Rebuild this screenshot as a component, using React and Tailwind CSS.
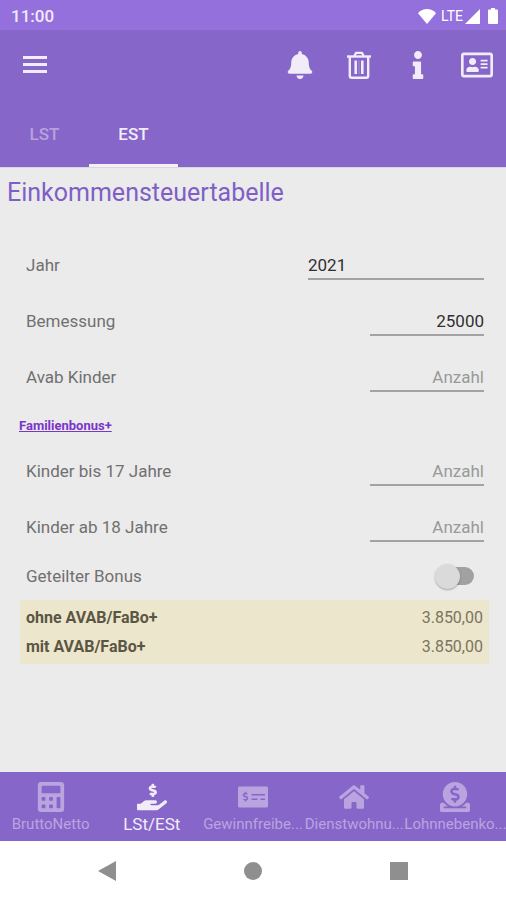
import { useState } from "react";
import {
  FaBell,
  FaInfo,
  FaRegAddressCard,
  FaCalculator,
  FaHandHoldingUsd,
  FaMoneyCheckAlt,
  FaHome,
  FaDonate,
} from "react-icons/fa";

function MenuIcon() {
  return (
    <svg viewBox="0 0 24 18" className="h-[18px] w-6" fill="currentColor" aria-hidden="true">
      <rect y="0" width="24" height="3" />
      <rect y="7" width="24" height="3" />
      <rect y="14" width="24" height="3" />
    </svg>
  );
}

function TrashIcon() {
  return (
    <svg viewBox="0 0 24 28" className="h-7 w-6" fill="none" stroke="currentColor" aria-hidden="true">
      <path d="M0 5.5h24" strokeWidth="2.4" />
      <path d="M7.4 5 9 1.8h6L16.6 5" strokeWidth="2.2" strokeLinejoin="round" />
      <path d="M2.8 5.5v19.200a2 2 0 0 0 2 2h14.400a2 2 0 0 0 2-2V5.500" strokeWidth="2.400" />
      <path d="M8.700 9.500v13.500M15.300 9.500v13.500" strokeWidth="2.600" />
      <path d="M12 9.500v13.500" strokeWidth="1" opacity="0.35" />
    </svg>
  );
}

function StatusBar() {
  return (
    <div className="flex h-[30px] items-center justify-between bg-[#9370db] pt-0.5 pl-[11px] pr-2 text-white">
      <span className="text-[17px] leading-5 font-medium text-[#f0eafb]">11:00</span>
      <div className="flex items-center">
        <svg viewBox="0 0 18 15" className="h-[15px] w-[18px]" fill="currentColor" aria-hidden="true">
          <path d="M0 4.200C5-1.400 13-1.400 18 4.200L9 15z" />
        </svg>
        <span className="ml-[5px] text-[14px] leading-5">LTE</span>
        <svg viewBox="0 0 15 15" className="ml-[2px] h-[15px] w-[15px]" fill="currentColor" aria-hidden="true">
          <path d="M15 0v15H0z" />
        </svg>
        <svg viewBox="0 0 10 16" className="ml-2 h-4 w-[10px]" fill="currentColor" aria-hidden="true">
          <path d="M3 0h4v1.600h2a1 1 0 0 1 1 1V15a1 1 0 0 1-1 1H1a1 1 0 0 1-1-1V2.600a1 1 0 0 1 1-1h2z" />
        </svg>
      </div>
    </div>
  );
}

function Toolbar() {
  return (
    <div className="flex h-[70px] items-center justify-between text-[#f1ecf8]">
      <button type="button" aria-label="Menü" className="flex h-12 w-[70px] items-center justify-center">
        <MenuIcon />
      </button>
      <div className="flex">
        <button type="button" aria-label="Benachrichtigungen" className="flex h-12 w-[59px] items-center justify-center">
          <FaBell className="h-7 w-7" />
        </button>
        <button type="button" aria-label="Löschen" className="flex h-12 w-[59px] items-center justify-center">
          <TrashIcon />
        </button>
        <button type="button" aria-label="Info" className="flex h-12 w-[59px] items-center justify-center">
          <FaInfo className="h-7 w-7" />
        </button>
        <button type="button" aria-label="Kontakt" className="flex h-12 w-[59px] items-center justify-center">
          <FaRegAddressCard className="h-8 w-8" />
        </button>
      </div>
    </div>
  );
}

function Tabs() {
  const base = "flex h-[67px] w-[89px] items-center justify-center border-b-[3px] pt-1 text-[17px] leading-5 font-medium";
  return (
    <div role="tablist" className="flex">
      <button type="button" role="tab" aria-selected="false" className={`${base} border-transparent text-[#b7a2dd]`}>
        LST
      </button>
      <button type="button" role="tab" aria-selected="true" className={`${base} border-[#f3f0f8] text-[#f1ecf8]`}>
        EST
      </button>
    </div>
  );
}

function Row({ id, label, children }) {
  return (
    <div className="flex h-14 items-center justify-between">
      <label htmlFor={id}>{label}</label>
      {children}
    </div>
  );
}

function NumberField({ id, label, initial = "" }) {
  const [value, setValue] = useState(initial);
  return (
    <Row id={id} label={label}>
      <input
        id={id}
        inputMode="numeric"
        placeholder="Anzahl"
        value={value}
        onChange={(e) => setValue(e.target.value)}
        className="h-[30px] w-[114px] border-b-2 border-[#a2a2a2] bg-transparent pt-0.5 text-right text-[#303030] outline-none placeholder:text-[#999999]"
      />
    </Row>
  );
}

function Result({ label, value }) {
  return (
    <div className="flex h-[29px] items-center justify-between text-[16px]">
      <dt className="font-bold text-[#5b5644]">{label}</dt>
      <dd className="text-[#7b745f]">{value}</dd>
    </div>
  );
}

const navItems = [
  { label: "BruttoNetto", Icon: FaCalculator },
  { label: "LSt/ESt", Icon: FaHandHoldingUsd, active: true },
  { label: "Gewinnfreibe...", Icon: FaMoneyCheckAlt },
  { label: "Dienstwohnu...", Icon: FaHome },
  { label: "Lohnnebenko...", Icon: FaDonate },
];

function BottomNav() {
  return (
    <nav className="grid h-[69px] grid-cols-5 bg-[#8766ca]">
      {navItems.map(({ label, Icon, active }) => (
        <a
          key={label}
          href="#"
          className={`flex min-w-0 flex-col items-center pt-[10px] ${active ? "text-[#f1ecf8]" : "text-[#b9a4df]"}`}
        >
          <Icon className="h-[30px] w-[30px]" />
          <span className={`leading-6 whitespace-nowrap ${active ? "text-[17px]" : "text-[15px]"}`}>{label}</span>
        </a>
      ))}
    </nav>
  );
}

function SystemNav() {
  return (
    <div className="flex h-[59px] items-center justify-center gap-32 bg-white text-[#8f8f8f]">
      <button type="button" aria-label="Zurück">
        <svg viewBox="0 0 18 20" className="h-5 w-[18px]" fill="currentColor" aria-hidden="true">
          <path d="M18 0v20L0 10z" />
        </svg>
      </button>
      <button type="button" aria-label="Startbildschirm" className="h-[18px] w-[18px] rounded-full bg-[#8f8f8f]" />
      <button type="button" aria-label="Übersicht" className="h-[18px] w-[18px] bg-[#8f8f8f]" />
    </div>
  );
}

export default function App() {
  const [shared, setShared] = useState(false);
  return (
    <div className="flex min-h-screen flex-col bg-[#ebebeb] font-['Roboto',sans-serif]">
      <StatusBar />
      <header className="bg-[#8766ca]">
        <Toolbar />
        <Tabs />
      </header>
      <main className="flex-1 border-t border-[#d9d6de] text-[17px] leading-5 text-[#707070]">
        <h1 className="px-[7px] pt-[9px] text-[25px] leading-8 text-[#7f5fc6]">Einkommensteuertabelle</h1>
        <form className="mt-7 pl-[26px] pr-[22px]">
          <Row id="jahr" label="Jahr">
            <select
              id="jahr"
              defaultValue="2021"
              className="h-[30px] w-[176px] appearance-none border-b-2 border-[#a2a2a2] bg-transparent pt-0.5 text-[#303030] outline-none"
            >
              <option>2021</option>
              <option>2020</option>
            </select>
          </Row>
          <NumberField id="bemessung" label="Bemessung" initial="25000" />
          <NumberField id="avab" label="Avab Kinder" />
          <div className="-ml-[7px] flex h-[38px] items-center pt-1">
            <a href="#" className="text-[13px] font-bold text-[#7a35c9] underline">
              Familienbonus+
            </a>
          </div>
          <NumberField id="bis17" label="Kinder bis 17 Jahre" />
          <NumberField id="ab18" label="Kinder ab 18 Jahre" />
          <div className="flex h-[42px] items-center justify-between pr-[10px]">
            <label htmlFor="bonus">Geteilter Bonus</label>
            <input
              id="bonus"
              type="checkbox"
              role="switch"
              checked={shared}
              onChange={(e) => setShared(e.target.checked)}
              className="flex h-[18px] w-[39px] appearance-none items-center rounded-full bg-[linear-gradient(#a1a1a1,#a1a1a1)] bg-[length:28px_18px] bg-right bg-no-repeat before:h-[25px] before:w-[25px] before:shrink-0 before:rounded-full before:bg-[#dadada] before:shadow-[0_1px_2px_rgba(0,0,0,0.3)] checked:justify-end"
            />
          </div>
        </form>
        <dl className="mt-[3px] mr-[17px] ml-5 bg-[#ece6cc] px-[6px] py-[3px]">
          <Result label="ohne AVAB/FaBo+" value="3.850,00" />
          <Result label="mit AVAB/FaBo+" value="3.850,00" />
        </dl>
      </main>
      <BottomNav />
      <SystemNav />
    </div>
  );
}
